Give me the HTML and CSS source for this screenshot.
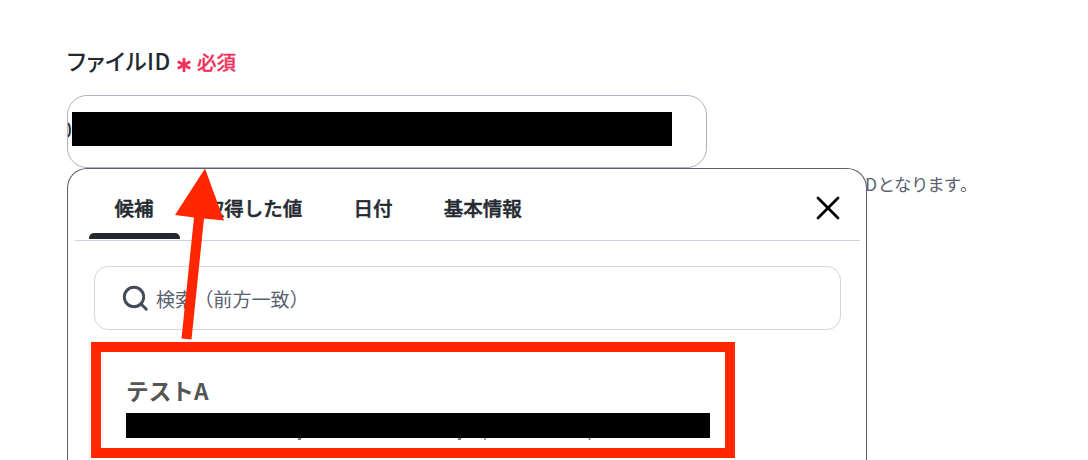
FILE: index.html
```html
<!DOCTYPE html>
<html lang="ja">
<head>
    <meta charset="UTF-8">
    <meta name="viewport" content="width=device-width, initial-scale=1.0">
    <title>ファイルID</title>
    <link rel="stylesheet" href="styles.css">
</head>
<body>
    <div class="field">
        <div class="field-label">
            <span class="label-text">ファイルID</span>
            <svg class="asterisk" width="14" height="16" viewBox="0 0 14 16">
                <path d="M7 1v14M0.8 4.5l12.4 7M13.2 4.5l-12.4 7"/>
            </svg>
            <span class="required">必須</span>
        </div>
        <div class="field-input">
            <span class="input-value">0</span>
            <span class="mask mask-value"></span>
        </div>
        <div class="help-text">Dとなります。</div>

        <div class="dropdown">
            <div class="tabs">
                <div class="tab active">候補</div>
                <div class="tab">取得した値</div>
                <div class="tab">日付</div>
                <div class="tab">基本情報</div>
                <svg class="close" width="24" height="24" viewBox="0 0 24 24">
                    <path d="M2 2l20 20M22 2L2 22"/>
                </svg>
            </div>
            <div class="search">
                <svg class="search-icon" width="28" height="28" viewBox="0 0 28 28">
                    <circle cx="13" cy="12" r="9.7"/>
                    <path d="M20 19l5.3 5.3"/>
                </svg>
                <span>検索（前方一致）</span>
            </div>
            <div class="option">
                <div class="option-title">テストA</div>
                <div class="mask mask-option">
                    <svg width="584" height="28" viewBox="0 0 584 28">
                        <path d="M172 26.3q2 .3 3-1.3M332 26.3q2 .3 3-1.3M359 25v1.7M463.5 25v1.7"/>
                    </svg>
                </div>
            </div>
        </div>
    </div>

    <!-- red marks over the form -->
    <div class="highlight"></div>
    <svg class="arrow" width="60" height="176" viewBox="0 0 60 176">
        <path d="M31 0.5L50 52.5L30 50.5L17.5 171.5L7.5 170.5L20 49.5L1 47Z"/>
    </svg>
</body>
</html>
```
FILE: styles.css
```css
body {
    font-family: "Noto Sans CJK JP", sans-serif;
    background-color: #fff;
    color: #23292f;
    margin: 0;
    height: 460px;
    overflow: hidden;
    position: relative;
}
.field {
    position: relative;
    box-sizing: border-box;
    height: 460px;
    padding: 45px 0 0 67px;
}
.field-label {
    display: flex;
    align-items: center;
    height: 34px;
    margin-bottom: 16px;
}
.label-text {
    margin-top: -4px;
    font-size: 22.5px;
    font-weight: 500;
    font-feature-settings: "palt";
    letter-spacing: 0.55px;
    width: 110px;
    white-space: nowrap;
}
.asterisk {
    margin-top: 6px;
    stroke: #f0325a;
    stroke-width: 2.8;
}
.required {
    margin-top: -2px;
    margin-left: 6px;
    font-size: 19.5px;
    font-weight: 500;
    color: #f0325a;
    -webkit-text-stroke: 0.3px #f0325a;
}
.field-input {
    display: flex;
    align-items: center;
    box-sizing: border-box;
    width: 640px;
    height: 73px;
    border: 1px solid #abb4c0;
    border-radius: 20px;
    overflow: hidden;
}
.input-value {
    width: 4px;
    font-size: 22px;
    margin-top: -7px;
    direction: rtl;
    white-space: nowrap;
}
.mask {
    background: #000;
}
.mask-value {
    width: 600px;
    height: 34px;
    margin-top: -5px;
    z-index: 1;
}
.help-text {
    margin-top: 3px;
    padding-left: 798px;
    font-size: 17.5px;
    line-height: 26px;
    font-feature-settings: "palt";
    letter-spacing: 1px;
    color: #596270;
    white-space: nowrap;
}
.dropdown {
    position: absolute;
    top: 168px;
    left: 67px;
    box-sizing: border-box;
    width: 800px;
    height: 292px;
    padding: 0 6px 0 7px;
    background: #fff;
    border: 1px solid #59616d;
    border-bottom: none;
    border-radius: 20px 20px 0 0;
}
.tabs {
    display: flex;
    align-items: center;
    height: 71px;
    padding: 0 20px 0 14px;
    border-bottom: 1px solid #ccd3dc;
}
.tab {
    display: flex;
    align-items: center;
    box-sizing: border-box;
    height: 71px;
    padding: 6px 25.6px 0 25.6px;
    font-size: 19.5px;
    font-weight: 500;
    -webkit-text-stroke: 0.5px #23292f;
}
.tab.active {
    position: relative;
}
.tab.active::after {
    content: "";
    position: absolute;
    left: 0;
    bottom: 1px;
    width: 91px;
    height: 6px;
    background: #23292f;
    border-radius: 5px 5px 0 0;
}
.close {
    margin-left: auto;
    margin-top: 6px;
    fill: none;
    stroke: #000;
    stroke-width: 2.8;
    stroke-linecap: round;
}
.search {
    display: flex;
    align-items: center;
    box-sizing: border-box;
    width: 747px;
    height: 64px;
    margin: 25px 0 0 19px;
    padding: 1px 0 0 26px;
    border: 1px solid #d0d6de;
    border-radius: 14px;
    font-size: 19.1px;
    color: #596270;
}
.search-icon {
    margin-right: 7px;
    fill: none;
    stroke: #434b57;
    stroke-width: 2.9;
    stroke-linecap: round;
}
.option {
    padding: 44px 0 0 51px;
}
.option-title {
    height: 39px;
    font-size: 22.7px;
    line-height: 34px;
    font-weight: 600;
    color: #555;
}
.mask-option {
    width: 584px;
    height: 25px;
}
.mask-option svg {
    display: block;
    fill: none;
    stroke: #596270;
    stroke-width: 1.5;
}
.highlight {
    position: absolute;
    top: 342px;
    left: 91px;
    box-sizing: border-box;
    width: 644px;
    height: 116px;
    border: 10px solid #ff2600;
}
.arrow {
    position: absolute;
    top: 168px;
    left: 174px;
    fill: #ff2600;
}
```
